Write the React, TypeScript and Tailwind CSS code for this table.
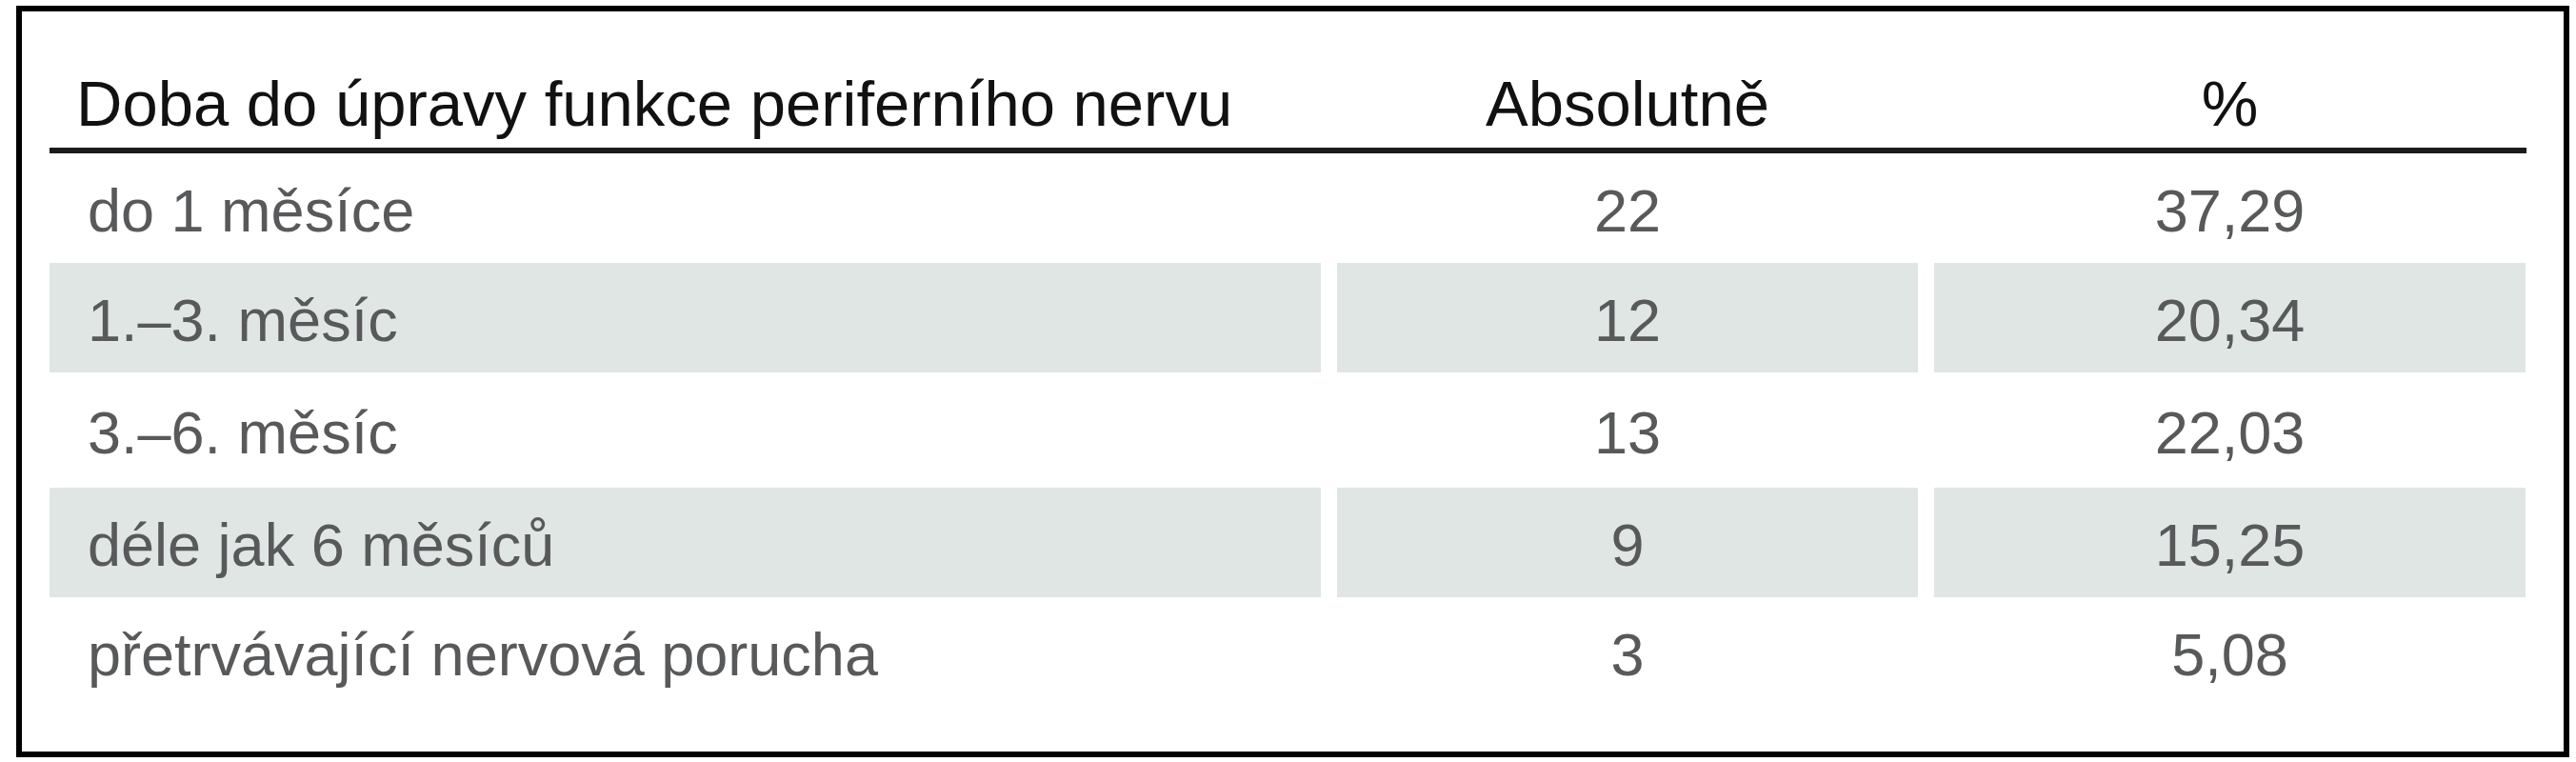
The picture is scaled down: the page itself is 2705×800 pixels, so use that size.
import React from 'react';

interface Row {
  label: string;
  abs: string;
  pct: string;
  shaded: boolean;
  height: string;
}

const rows: Row[] = [
  { label: 'do 1 měsíce', abs: '22', pct: '37,29', shaded: false, height: 'h-[115px]' },
  { label: '1.–3. měsíc', abs: '12', pct: '20,34', shaded: true, height: 'h-[115px]' },
  { label: '3.–6. měsíc', abs: '13', pct: '22,03', shaded: false, height: 'h-[121px]' },
  { label: 'déle jak 6 měsíců', abs: '9', pct: '15,25', shaded: true, height: 'h-[115px]' },
  { label: 'přetrvávající nervová porucha', abs: '3', pct: '5,08', shaded: false, height: 'h-[115px]' },
];

const App: React.FC = () => {
  return (
    <div className="w-[2705px] h-[800px] bg-white pt-[6px] pl-[17px] font-['Liberation_Sans',Arial,sans-serif]">
      <div className="w-[2681px] h-[789px] border-[6px] border-black pl-[29px] pr-[39px]">
        {/* Header */}
        <div className="grid grid-cols-[1335px_610px_621px] gap-x-[17px] h-[149px] items-end border-b-[6px] border-[#1c1c1c] text-[67px] leading-none text-[#111] pb-[13px]">
          <div className="pl-[28px]">Doba do úpravy funkce periferního nervu</div>
          <div className="text-center">Absolutně</div>
          <div className="text-center">%</div>
        </div>

        {/* Body rows */}
        {rows.map((r) => (
          <div
            key={r.label}
            className={`grid grid-cols-[1335px_610px_621px] gap-x-[17px] ${r.height} text-[63px] leading-none text-[#58595b]`}
          >
            <div className={`flex items-center pl-[40px] pt-[6px] ${r.shaded ? 'bg-[#dfe6e4]' : ''}`}>{r.label}</div>
            <div className={`flex items-center justify-center pt-[6px] ${r.shaded ? 'bg-[#dfe6e4]' : ''}`}>{r.abs}</div>
            <div className={`flex items-center justify-center pt-[6px] ${r.shaded ? 'bg-[#dfe6e4]' : ''}`}>{r.pct}</div>
          </div>
        ))}
      </div>
    </div>
  );
};

export default App;
